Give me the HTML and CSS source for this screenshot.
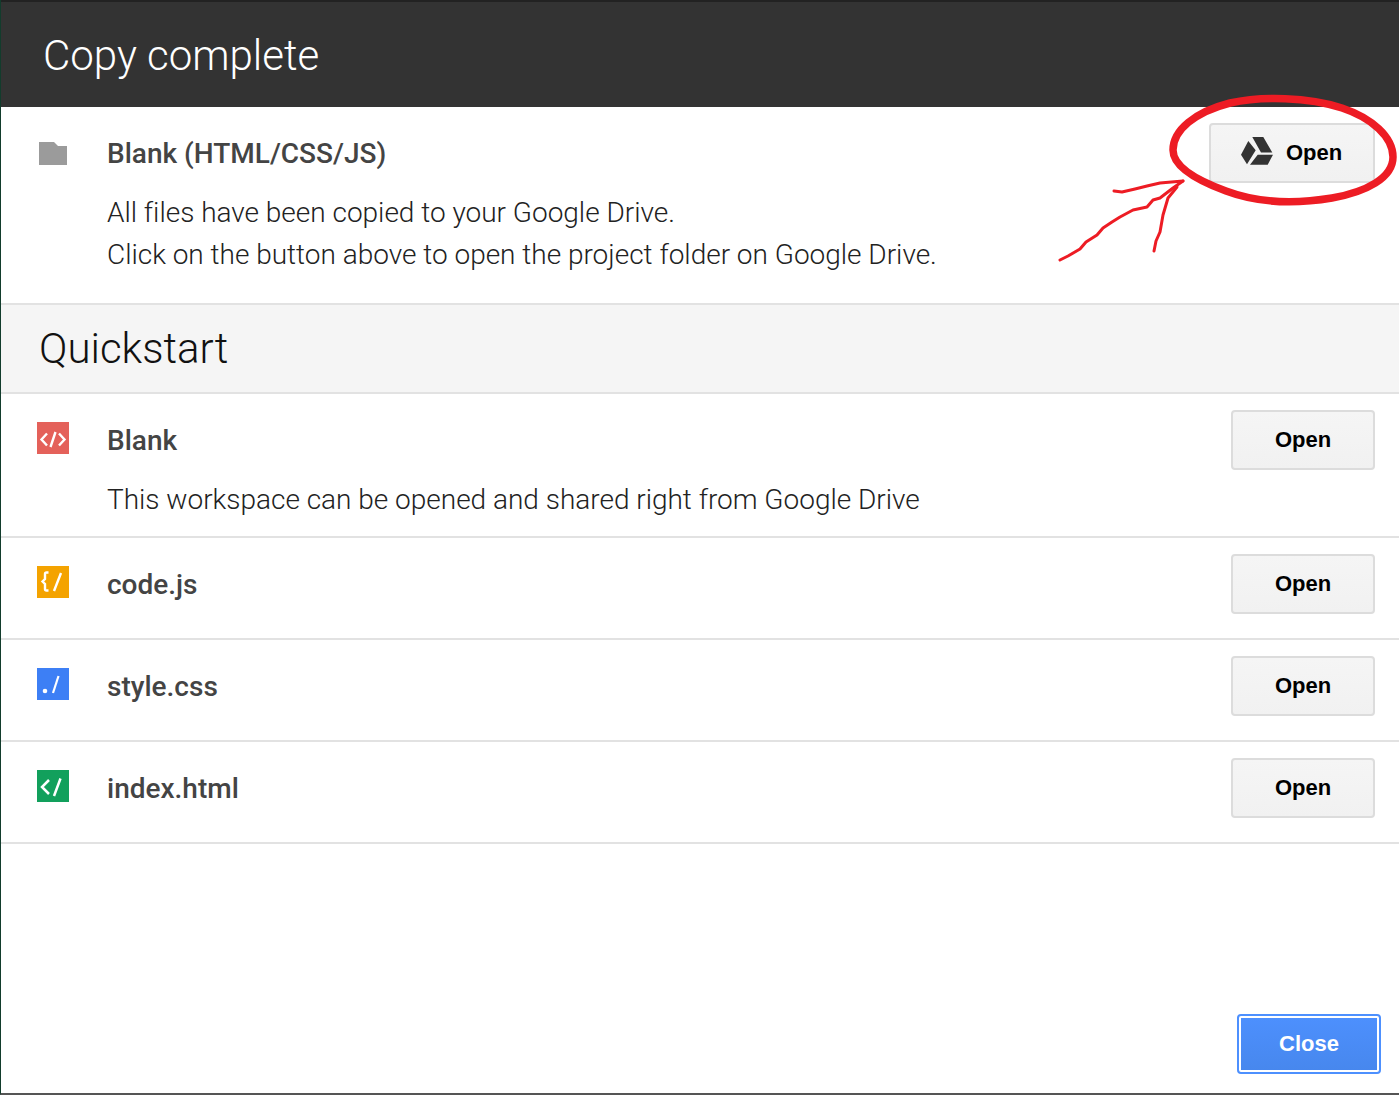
FILE: index.html
```html
<!DOCTYPE html>
<html lang="en">
<head>
<meta charset="utf-8">
<title>Copy complete</title>
<link rel="stylesheet" href="styles.css">
</head>
<body>
<div class="dialog">
  <header class="dialog-header"><h1>Copy complete</h1></header>

  <section class="row row-project">
    <div class="icon-cell">
      <svg class="folder" width="28" height="23" viewBox="0 0 28 23"><path fill="#9b9b9b" d="M0 0h15l4 4h9v19H0z"/></svg>
    </div>
    <div class="row-text">
      <h2>Blank (HTML/CSS/JS)</h2>
      <p>All files have been copied to your Google Drive.<br>Click on the button above to open the project folder on Google Drive.</p>
    </div>
    <button class="btn btn-drive">
      <svg class="drive-icon" width="32" height="28" viewBox="0 0 32 28"><path fill="#333" d="M7.300 4 0 17.700 6 27.300 14.700 13.300zM11.300 0H22.300L31.300 15.500H20zM16.700 17.700H32L26.700 27.700H9z"/></svg>
      <span>Open</span>
    </button>
  </section>

  <h2 class="section-title">Quickstart</h2>

  <section class="row row-blank">
    <div class="icon-cell">
      <svg class="file-icon" width="32" height="32" viewBox="0 0 32 32"><rect width="32" height="32" fill="#e4615a"/><path class="glyph" fill="none" stroke="#fff" stroke-width="2.400" d="M10 11.500l-5.500 6 5.500 6M22 11.500l5.500 6-5.500 6M18.500 10l-5 15"/></svg>
    </div>
    <div class="row-text">
      <h2>Blank</h2>
      <p>This workspace can be opened and shared right from Google Drive</p>
    </div>
    <button class="btn">Open</button>
  </section>

  <section class="row row-file">
    <div class="icon-cell">
      <svg class="file-icon" width="32" height="32" viewBox="0 0 32 32"><rect width="32" height="32" fill="#f4a300"/><path class="glyph" fill="none" stroke="#fff" stroke-width="2.400" d="M11.500 6.500H9.500Q8 6.500 8 8v5l-2.500 2.500L8 18v5q0 1.500 1.500 1.500h2M24 7l-7 18"/></svg>
    </div>
    <div class="row-text"><h2>code.js</h2></div>
    <button class="btn">Open</button>
  </section>

  <section class="row row-file">
    <div class="icon-cell">
      <svg class="file-icon" width="32" height="32" viewBox="0 0 32 32"><rect width="32" height="32" fill="#3d7ff5"/><g class="glyph"><circle cx="8" cy="23" r="2.300" fill="#fff"/><path fill="none" stroke="#fff" stroke-width="2.200" d="M21.500 8L16 25"/></g></svg>
    </div>
    <div class="row-text"><h2>style.css</h2></div>
    <button class="btn">Open</button>
  </section>

  <section class="row row-file">
    <div class="icon-cell">
      <svg class="file-icon" width="32" height="32" viewBox="0 0 32 32"><rect width="32" height="32" fill="#12a05c"/><path class="glyph" fill="none" stroke="#fff" stroke-width="2.500" d="M12 10l-7 7 7 7M23.500 8.500L17 26"/></svg>
    </div>
    <div class="row-text"><h2>index.html</h2></div>
    <button class="btn">Open</button>
  </section>

  <footer class="dialog-footer"><button class="btn-close">Close</button></footer>

  <svg class="annotation" width="1399" height="1095" viewBox="0 0 1399 1095">
    <g fill="none" stroke="#ed1c24" stroke-linecap="round" stroke-linejoin="round">
      <path stroke-width="7.500" d="M1230 103C1262 96 1308 97 1342 108C1372 118 1393 137 1393 157C1393 178 1366 192 1332 198C1296 204 1258 203 1226 191C1196 180 1173 166 1173 150C1173 130 1195 112 1230 103Z"/>
      <path stroke-width="3" d="M1060 260L1068 256L1080 249L1086 242L1097 235L1103 228L1112 222L1120 217L1133 210L1147 207L1153 200L1160 198L1173 188L1183 181"/>
      <path stroke-width="3" d="M1114 191L1122 192L1135 189L1147 186L1160 183L1183 181"/>
      <path stroke-width="3" d="M1154 251L1156 241L1160 232L1163 215L1168 198L1177 187"/>
    </g>
  </svg>
</div>
</body>
</html>
```

FILE: styles.css
```css
* { box-sizing: border-box; }
html, body { margin: 0; padding: 0; background: #fff; }
body { font-family: Roboto, "Noto Sans", sans-serif; overflow: hidden; }
.dialog {
  position: relative;
  width: 1399px;
  height: 1095px;
  display: flex;
  flex-direction: column;
  border-left: 1px solid #123c2c;
  border-bottom: 2px solid #555;
}
.dialog-header {
  height: 107px;
  flex: none;
  background: #333;
  border-top: 2px solid #222;
  padding: 0 0 0 42px;
  display: flex;
  align-items: center;
}
.dialog-header h1 {
  margin: 0;
  font-size: 42px;
  font-weight: 300;
  color: #fff;
  line-height: 1;
  position: relative;
  top: 1px;
}
.row {
  display: flex;
  align-items: flex-start;
  border-bottom: 2px solid #e2e2e2;
  padding: 16px 24px 0 36px;
  flex: none;
}
.row-project { height: 198px; }
.row-blank { height: 144px; }
.row-file { height: 102px; }
.icon-cell { width: 70px; flex: none; height: 32px; margin-top: 12px; }
.row-project .icon-cell { margin-top: 19px; padding-left: 2px; }
.folder, .file-icon { display: block; }
.glyph { filter: blur(0.5px); }
.row-text { flex: 1; min-width: 0; }
.row-text h2 {
  margin: 0;
  font-size: 28px;
  font-weight: 500;
  color: #444;
  line-height: 62px;
}
.row-text p {
  margin: 7px 0 0;
  font-size: 28px;
  font-weight: 300;
  letter-spacing: -0.012px;
  color: #222;
  line-height: 42px;
}
.btn {
  width: 144px;
  height: 60px;
  flex: none;
  border: 2px solid #dcdcdc;
  border-radius: 4px;
  background: linear-gradient(#f5f5f5, #f1f1f1);
  font-family: "Liberation Sans", Arial, sans-serif;
  font-size: 22px;
  font-weight: 700;
  color: #000;
  padding: 0;
  display: flex;
  align-items: center;
  justify-content: center;
  gap: 13px;
}
.btn-drive { width: 166px; }
.drive-icon { margin: 0 0 4px -1px; }
.section-title {
  margin: 0;
  height: 89px;
  flex: none;
  background: #f5f5f5;
  border-bottom: 2px solid #e2e2e2;
  padding-left: 38px;
  font-size: 42px;
  font-weight: 300;
  color: #111;
  line-height: 88px;
}
.dialog-footer {
  flex: 1;
  display: flex;
  justify-content: flex-end;
  align-items: flex-end;
  padding: 0 18px 19px 0;
}
.btn-close {
  width: 144px;
  height: 60px;
  border: 2px solid #4d90fe;
  outline: 2px solid #fff;
  outline-offset: -4px;
  border-radius: 4px;
  background: linear-gradient(#4d90fe, #4787ed);
  font-family: "Liberation Sans", Arial, sans-serif;
  font-size: 22px;
  font-weight: 700;
  color: #fff;
  padding: 0;
}
.annotation { position: absolute; left: -1px; top: 0; pointer-events: none; }
```
